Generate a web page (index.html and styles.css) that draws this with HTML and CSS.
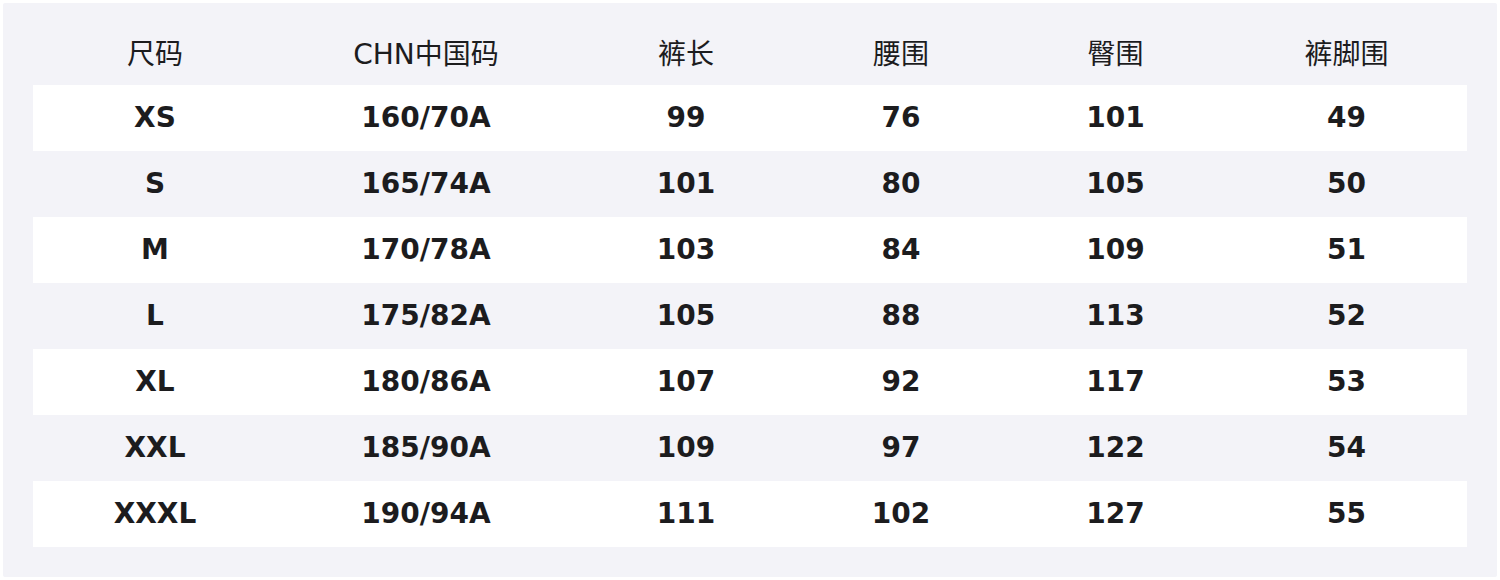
FILE: index.html
```html
<!DOCTYPE html>
<html lang="zh">
<head>
<meta charset="utf-8">
<link rel="stylesheet" href="styles.css">
</head>
<body>
<div class="panel">
  <div class="row head">
    <div>尺码</div><div>CHN中国码</div><div>裤长</div><div>腰围</div><div>臀围</div><div>裤脚围</div>
  </div>
  <div class="row odd"><div>XS</div><div>160/70A</div><div>99</div><div>76</div><div>101</div><div>49</div></div>
  <div class="row"><div>S</div><div>165/74A</div><div>101</div><div>80</div><div>105</div><div>50</div></div>
  <div class="row odd"><div>M</div><div>170/78A</div><div>103</div><div>84</div><div>109</div><div>51</div></div>
  <div class="row"><div>L</div><div>175/82A</div><div>105</div><div>88</div><div>113</div><div>52</div></div>
  <div class="row odd"><div>XL</div><div>180/86A</div><div>107</div><div>92</div><div>117</div><div>53</div></div>
  <div class="row"><div>XXL</div><div>185/90A</div><div>109</div><div>97</div><div>122</div><div>54</div></div>
  <div class="row odd"><div>XXXL</div><div>190/94A</div><div>111</div><div>102</div><div>127</div><div>55</div></div>
</div>
</body>
</html>
```
FILE: styles.css
```css
html, body {
  margin: 0;
  padding: 0;
  background: #ffffff;
}
body {
  width: 1500px;
  height: 580px;
  overflow: hidden;
  font-family: "DejaVu Sans", "Noto Sans CJK SC", sans-serif;
  color: #1c1c1e;
}
.panel {
  margin: 3px;
  height: 574px;
  box-sizing: border-box;
  padding: 16px 30px 30px;
  background: #f3f3f8;
  border-radius: 2px;
}
.row {
  display: grid;
  grid-template-columns: 244px 298px 222px 208px 221px 241px;
  height: 66px;
  box-sizing: border-box;
  padding-bottom: 1px;
  align-items: center;
  justify-items: center;
  font-size: 28px;
  font-weight: bold;
}
.row.head {
  font-weight: normal;
  font-size: 28px;
}
.row.odd {
  background: #ffffff;
}
```
